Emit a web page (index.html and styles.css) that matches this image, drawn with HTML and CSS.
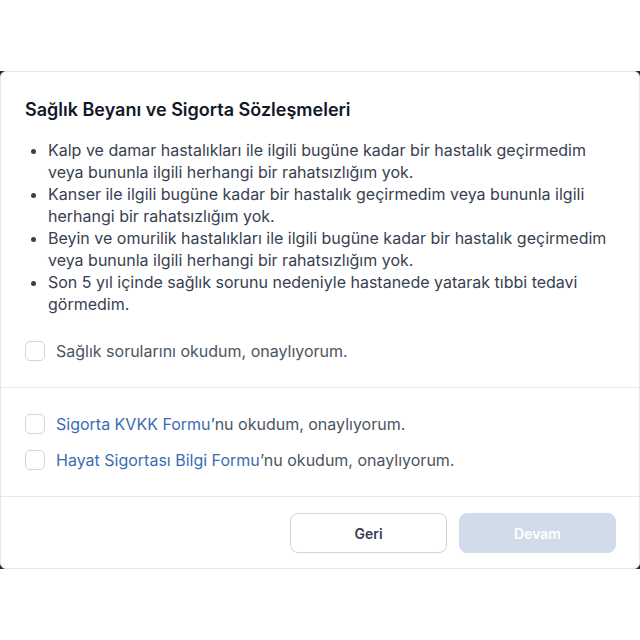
FILE: index.html
```html
<!DOCTYPE html>
<html lang="tr">
<head>
<meta charset="utf-8">
<link rel="stylesheet" href="styles.css">
</head>
<body>
<div class="frame">
  <div class="card">
    <section class="section first">
      <h2 class="title">Sağlık Beyanı ve Sigorta Sözleşmeleri</h2>
      <ul class="list">
        <li>Kalp ve damar hastalıkları ile ilgili bugüne kadar bir hastalık geçirmedim veya bununla ilgili herhangi bir rahatsızlığım yok.</li>
        <li>Kanser ile ilgili bugüne kadar bir hastalık geçirmedim veya bununla ilgili herhangi bir rahatsızlığım yok.</li>
        <li>Beyin ve omurilik hastalıkları ile ilgili bugüne kadar bir hastalık geçirmedim veya bununla ilgili herhangi bir rahatsızlığım yok.</li>
        <li>Son 5 yıl içinde sağlık sorunu nedeniyle hastanede yatarak tıbbi tedavi görmedim.</li>
      </ul>
      <label class="check"><span class="box"></span><span>Sağlık sorularını okudum, onaylıyorum.</span></label>
    </section>
    <section class="section second">
      <label class="check"><span class="box"></span><span><span class="link">Sigorta KVKK Formu</span>’nu okudum, onaylıyorum.</span></label>
      <label class="check"><span class="box"></span><span><span class="link">Hayat Sigortası Bilgi Formu</span>’nu okudum, onaylıyorum.</span></label>
    </section>
    <footer class="footer">
      <button class="btn back">Geri</button>
      <button class="btn next">Devam</button>
    </footer>
  </div>
</div>
</body>
</html>
```

FILE: styles.css
```css
* { box-sizing: border-box; }
html, body { margin: 0; padding: 0; background: #ffffff; }
body { font-family: Inter, "Noto Sans", sans-serif; }

.frame {
  margin-top: 71px;
  width: 640px;
  background: #1f2937;
}
.card {
  background: #ffffff;
  border: 1px solid #e5e7eb;
  border-radius: 6px;
}
.section { padding: 24px; border-bottom: 1px solid #e5e7eb; }
.title {
  margin: 0 0 15px 0;
  font-size: 18px;
  line-height: 28px;
  font-weight: 600;
  color: #111827;
}
.list {
  margin: 0 0 24px 0;
  padding-left: 23px;
  font-size: 16px;
  line-height: 22px;
  color: #374151;
}
.check {
  display: flex;
  align-items: center;
  gap: 11px;
  font-size: 16px;
  line-height: 24px;
  color: #4b5563;
}
.second { display: flex; flex-direction: column; gap: 12px; padding-top: 24px; }
.box {
  width: 20px;
  height: 20px;
  border: 1px solid #d1d5db;
  border-radius: 5px;
  flex: none;
}
.link { color: #3b6cb3; }
.footer {
  display: flex;
  justify-content: flex-end;
  gap: 12px;
  padding: 16px 23px 15px 24px;
}
.btn {
  width: 157px;
  height: 40px;
  border-radius: 8px;
  font-family: Inter, "Noto Sans", sans-serif;
  font-size: 14px;
  font-weight: 600;
}
.back { background: #ffffff; border: 1px solid #d1d5db; color: #374151; }
.next { background: #d1dbea; border: 1px solid #d1dbea; color: #ffffff; }
```
